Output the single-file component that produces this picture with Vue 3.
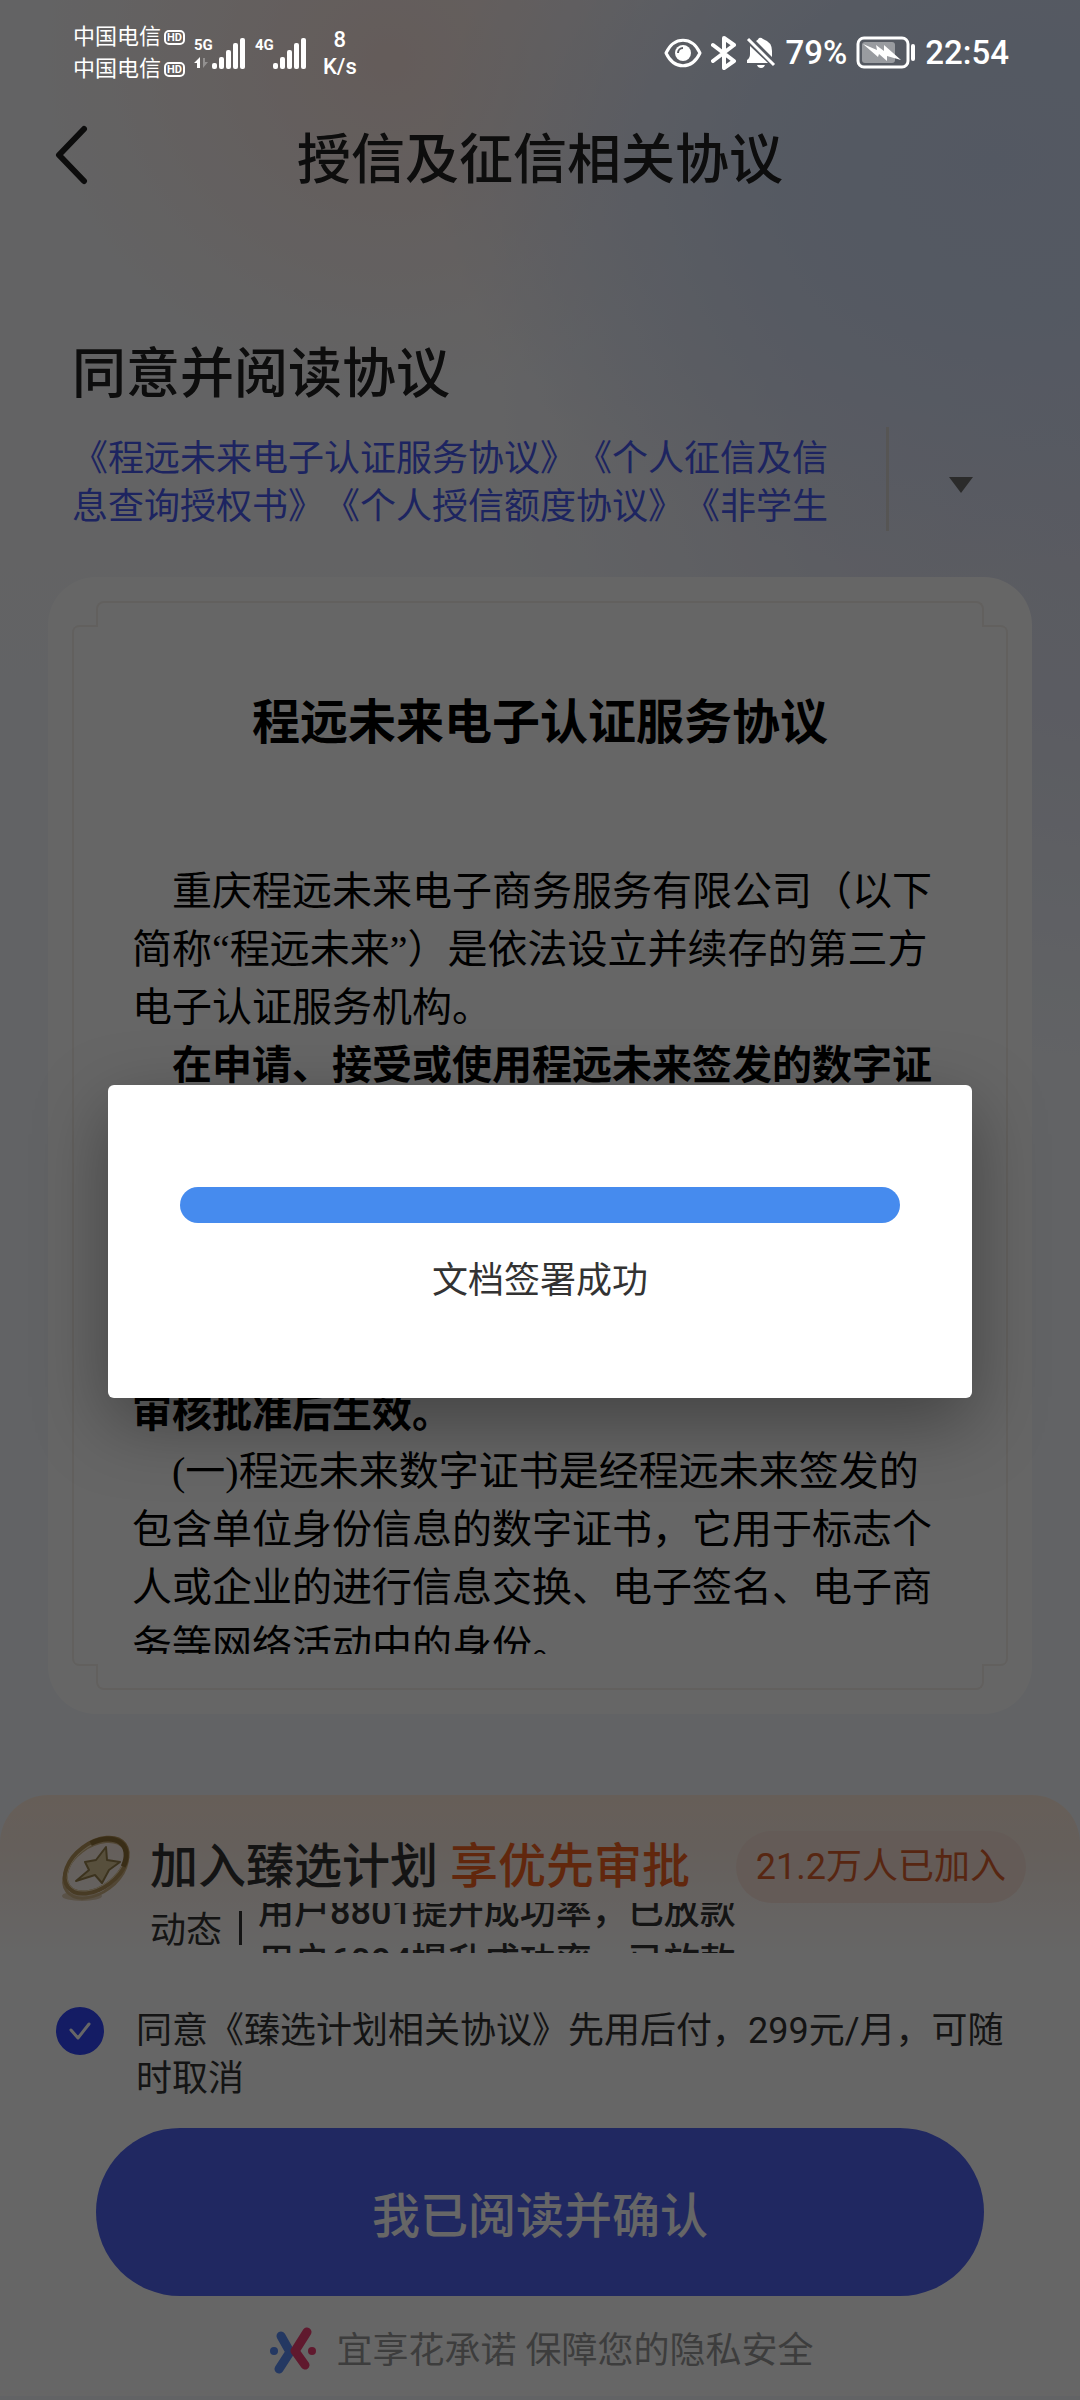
<script setup>
import { ref } from 'vue'

const agreed = ref(true)
const agreements = [
  '《程远未来电子认证服务协议》',
  '《个人征信及信息查询授权书》',
  '《个人授信额度协议》',
  '《非学生承诺函》',
]
const feed = ['用户8801提升成功率，已放款', '用户6094提升成功率，已放款']
const bars = [6, 12, 19, 26, 31]
</script>

<template>
  <div class="page">
    <header class="nav">
      <button class="back" aria-label="返回">
        <svg width="34" height="60" viewBox="0 0 34 60">
          <path d="M30 4 L5 30 L30 56" fill="none" stroke="#1f1f1f" stroke-width="6" stroke-linecap="round" stroke-linejoin="round" />
        </svg>
      </button>
      <h1>授信及征信相关协议</h1>
    </header>

    <section class="intro">
      <h2>同意并阅读协议</h2>
      <div class="picker">
        <p class="links"><a v-for="a in agreements" :key="a" href="#">{{ a }}</a></p>
        <button class="more" aria-label="展开协议列表">
          <svg width="24" height="16" viewBox="0 0 24 16"><path d="M0 0H24L12 16Z" fill="#6b6b6b" /></svg>
        </button>
      </div>
    </section>

    <main class="card">
      <div class="frame">
        <i class="edge upper"></i>
        <i class="edge lower"></i>
        <i class="edge sides"></i>
        <article class="doc">
          <h3>程远未来电子认证服务协议</h3>
          <p>重庆程远未来电子商务服务有限公司（以下简称“程远未来”）是依法设立并续存的第三方电子认证服务机构。</p>
          <p><b>在申请、接受或使用程远未来签发的数字证书之前，您应当认真阅读、充分理解并同意本协议的全部内容。若您不同意本协议，请勿申请、接受或使用数字证书。您的申请行为即视为您已经知悉并接受本协议的约束，且愿意承担相应的法律责任。本协议自证书申请经机构审核批准后生效。</b></p>
          <p>(一)程远未来数字证书是经程远未来签发的包含单位身份信息的数字证书，它用于标志个人或企业的进行信息交换、电子签名、电子商务等网络活动中的身份。</p>
        </article>
      </div>
    </main>

    <footer class="panel">
      <div class="plan">
        <svg class="medal" width="78" height="72" viewBox="0 0 78 72">
          <ellipse cx="26" cy="65" rx="20" ry="5" fill="#e2cdb2" />
          <g fill="none" transform="rotate(-37 40 36)">
            <ellipse cx="38" cy="38" rx="36" ry="23" stroke="#cdb284" stroke-width="3" />
            <ellipse cx="41" cy="35" rx="35" ry="22" stroke="#b4935a" stroke-width="5" />
            <ellipse cx="41" cy="35" rx="33" ry="20" stroke="#efdcb6" stroke-width="1" />
            <path d="M50 14 A35 22 0 0 1 62 52" stroke="#8f7038" stroke-width="5" />
          </g>
          <path d="M50 16 L51 29 L64 31 L53 39 L46 52 L39 44 L20 50 L33 39 L29 31 L40 29Z" fill="#d9c597" stroke="#97804c" stroke-width="2" stroke-linejoin="round" />
        </svg>
        <h4>加入臻选计划 <em>享优先审批</em></h4>
        <span class="joined">21.2万人已加入</span>
      </div>
      <div class="news">
        <span class="label">动态</span>
        <i class="bar"></i>
        <ul class="ticker">
          <li v-for="f in feed" :key="f">{{ f }}</li>
        </ul>
      </div>
      <label class="agree">
        <input v-model="agreed" type="checkbox" />
        <span>同意《臻选计划相关协议》先用后付，299元/月，可随时取消</span>
      </label>
      <button class="confirm">我已阅读并确认</button>
      <p class="promise">
        <svg width="48" height="50" viewBox="0 0 48 50">
          <g fill="none" stroke-width="9" stroke-linecap="round" stroke-linejoin="round">
            <path d="M12 10 L21 26 L10 43" stroke="#5a8cf5" />
            <path d="M38 6 L26 25 L36 39" stroke="#f04074" />
          </g>
          <circle cx="5" cy="25" r="4" fill="#5a8cf5" />
          <circle cx="43" cy="25" r="4" fill="#f04074" />
        </svg>
        <span>宜享花承诺 保障您的隐私安全</span>
      </p>
    </footer>

    <div class="mask">
      <div class="dialog" role="dialog" aria-label="签署进度">
        <div class="progress" role="progressbar" aria-label="文档签署" aria-valuenow="100"></div>
        <p>文档签署成功</p>
      </div>
    </div>

    <div class="status">
      <div class="carriers">
        <div v-for="n in 2" :key="n" class="carrier">中国电信<span class="hd">HD</span></div>
      </div>
      <div class="signal">
        <div class="net">
          <b>5G</b>
          <svg width="14" height="12" viewBox="0 0 14 12">
            <path d="M0 6 L6 0 V11 H3 V6Z" fill="#fff" />
            <path d="M9 1 V11 L14 5 H11 V1Z" fill="#fff" opacity=".3" />
          </svg>
        </div>
        <svg class="bars" width="34" height="32" viewBox="0 0 34 32">
          <rect v-for="(h, i) in bars" :key="i" :x="i * 7" :y="32 - h" width="5" :height="h" rx="2" fill="#fff" />
        </svg>
      </div>
      <div class="signal">
        <div class="net"><b>4G</b></div>
        <svg class="bars" width="34" height="32" viewBox="0 0 34 32">
          <rect v-for="(h, i) in bars" :key="i" :x="i * 7" :y="32 - h" width="5" :height="h" rx="2" fill="#fff" />
        </svg>
      </div>
      <div class="speed"><span>8</span><span>K/s</span></div>
      <div class="tray">
        <svg width="38" height="30" viewBox="0 0 38 30">
          <path d="M2 15 C10 -2 28 -2 36 15 C28 32 10 32 2 15Z" fill="none" stroke="#fff" stroke-width="3" stroke-linejoin="round" />
          <circle cx="19" cy="15" r="8" fill="#fff" />
          <path d="M14 15 A5 5 0 0 1 19 10" fill="none" stroke="#5b5c62" stroke-width="2" />
        </svg>
        <svg width="26" height="34" viewBox="0 0 26 34">
          <path d="M2 9 L23 25 L13 32 V2 L23 9 L2 25" fill="none" stroke="#fff" stroke-width="4" stroke-linejoin="round" stroke-linecap="round" />
        </svg>
        <svg width="30" height="32" viewBox="0 0 30 32">
          <path d="M10 4 Q12 3 13 1 Q15 0 17 2 Q26 5 26 14 V20 Z" fill="#fff" />
          <path d="M4 9 L22 26 H1 V23 Q4 21 4 17Z" fill="#fff" />
          <path d="M2 2 L28 28" stroke="#fff" stroke-width="3" />
          <path d="M11 28 H19 Q18 31 15 31 Q12 31 11 28Z" fill="#fff" />
        </svg>
        <span class="num">79%</span>
        <svg class="battery" width="60" height="34" viewBox="0 0 60 34">
          <rect x="2" y="2" width="50" height="29" rx="6" fill="none" stroke="#fff" stroke-width="3" />
          <rect x="6" y="6" width="33" height="21" rx="3" fill="#fff" opacity=".4" />
          <path d="M57 10 V23" stroke="#fff" stroke-width="4" stroke-linecap="round" />
          <path d="M7 8 L21 14 L20 9 L28 15 L28 9 L45 24 L31 20 L31 25 L23 18 L22 21Z" fill="#fff" />
        </svg>
        <span class="num">22:54</span>
      </div>
    </div>
  </div>
</template>

<style>
body {
  background: #f6f9ff;
}
</style>

<style scoped>
* {
  box-sizing: border-box;
  margin: 0;
  padding: 0;
}
.page {
  position: relative;
  display: flex;
  flex-direction: column;
  min-height: 100vh;
  font-family: Roboto, "Noto Sans CJK SC", sans-serif;
  text-spacing-trim: space-all;
  color: #333;
  background:
    radial-gradient(ellipse 560px 420px at 92% 160px, #d0ddf6 0%, rgba(208, 221, 246, 0.8) 40%, rgba(208, 221, 246, 0) 100%),
    radial-gradient(ellipse 640px 700px at 104% 380px, #dde0f1 0%, rgba(221, 224, 241, 0.7) 50%, rgba(221, 224, 241, 0) 100%),
    radial-gradient(ellipse 360px 340px at 36% 60px, #f9e6e1 0%, rgba(249, 230, 225, 0) 100%),
    linear-gradient(#f8f8fa 0, #f8f8fa 440px, #f5f8fd 800px);
}
button {
  border: 0;
  background: none;
  font: inherit;
}
svg {
  display: block;
  flex: none;
}

/* top bar */
.nav {
  position: relative;
  display: flex;
  align-items: center;
  justify-content: center;
  height: 96px;
  margin-top: 113px;
}
.back {
  position: absolute;
  top: 12px;
  left: 54px;
}
h1,
h2 {
  font-size: 54px;
  line-height: 72px;
  font-weight: 500;
  color: #222;
}

/* agreement picker */
.intro {
  padding: 130px 48px 0 72px;
}
.picker {
  display: flex;
  height: 104px;
  margin-top: 16px;
}
.links {
  flex: none;
  width: 814px;
  padding: 8px 48px 0 0;
  overflow: hidden;
  font-size: 36px;
  line-height: 48px;
}
.links a {
  color: #4a5bf0;
  text-decoration: none;
}
.more {
  flex: 1;
  display: flex;
  align-items: center;
  justify-content: center;
  padding-top: 12px;
  border-left: 3px solid #d6d5d2;
}

/* document card */
.card {
  margin: 46px 48px 0;
  padding: 24px;
  border-radius: 48px;
  background: #fff;
}
.frame {
  position: relative;
  padding: 0 60px;
}
.edge {
  position: absolute;
  border: 2px solid #f4f0ec;
}
.upper {
  inset: 0 24px auto;
  height: 25px;
  border-bottom: 0;
  border-radius: 8px 8px 0 0;
}
.lower {
  inset: auto 24px 0;
  height: 25px;
  border-top: 0;
  border-radius: 0 0 8px 8px;
}
.sides {
  inset: 24px 0;
  border-top: 0;
  border-bottom: 0;
  border-radius: 8px;
}
.sides::before,
.sides::after {
  content: "";
  position: absolute;
  inset: 0 -2px;
  border: solid #f4f0ec;
  border-width: 2px 0;
  border-radius: 8px;
  clip-path: polygon(0 0, 26px 0, 26px 100%, 0 100%);
}
.sides::after {
  clip-path: polygon(calc(100% - 26px) 0, 100% 0, 100% 100%, calc(100% - 26px) 100%);
}
.doc {
  height: 1089px;
  padding-top: 86px;
  border-bottom: 36px solid transparent;
  overflow: hidden;
  font-family: "Liberation Serif", "Noto Sans CJK SC", sans-serif;
  font-size: 40px;
  line-height: 58px;
  color: #000;
}
.doc h3 {
  margin-bottom: 104px;
  font-size: 48px;
  line-height: 72px;
  font-weight: 700;
  text-align: center;
}
.doc p {
  text-indent: 40px;
}

/* bottom panel */
.panel {
  margin-top: 81px;
  padding: 36px 54px 20px 56px;
  border-radius: 48px 48px 0 0;
  background: linear-gradient(#ffecdc 0, #fcede3 50px, #fff 160px);
}
.plan {
  display: flex;
  align-items: center;
  height: 72px;
}
h4 {
  margin-left: 16px;
  font-size: 48px;
  line-height: 72px;
  font-weight: 500;
  color: #333;
}
em {
  font-style: normal;
  color: #f26322;
}
.joined {
  margin-left: auto;
  padding: 0 20px;
  border-radius: 36px;
  background: #fbe3d9;
  color: #d9602e;
  font-size: 36px;
  line-height: 72px;
}
.news {
  display: flex;
  align-items: flex-end;
  height: 50px;
  padding-left: 94px;
  font-size: 36px;
  line-height: 50px;
}
.label {
  line-height: 44px;
}
.bar {
  align-self: center;
  width: 3px;
  height: 34px;
  margin: 0 16px 0 17px;
  background: #333;
}
.ticker {
  height: 50px;
  overflow: hidden;
  list-style: none;
  font-weight: 500;
}
.ticker li:first-child {
  margin-top: -16px;
}
.agree {
  display: flex;
  align-items: flex-start;
  gap: 32px;
  margin-top: 54px;
  font-size: 36px;
  line-height: 48px;
}
.agree input {
  appearance: none;
  flex: none;
  width: 48px;
  height: 48px;
  border: 2px solid #3246fa;
  border-radius: 50%;
}
.agree input:checked {
  background: #3246fa url("data:image/svg+xml,%3Csvg xmlns='http://www.w3.org/2000/svg' viewBox='0 0 48 48'%3E%3Cpath d='M15 23 L22 31 L33 17' fill='none' stroke='%23fff' stroke-width='3' stroke-linecap='round' stroke-linejoin='round'/%3E%3C/svg%3E") center / 48px;
}
.confirm {
  display: block;
  width: calc(100% - 82px);
  height: 168px;
  margin: 25px 42px 0 40px;
  border-radius: 84px;
  background: #5064f2;
  color: #fff;
  font-size: 48px;
  font-weight: 500;
}
.promise {
  display: flex;
  align-items: center;
  justify-content: center;
  gap: 20px;
  margin-top: 30px;
  font-size: 36px;
  line-height: 50px;
  color: #999;
}

/* dialog */
.mask {
  position: absolute;
  inset: 0;
  display: flex;
  align-items: center;
  justify-content: center;
  padding-top: 82px;
  background: rgba(0, 0, 0, 0.6);
}
.dialog {
  width: 80%;
  padding: 102px 72px 90px;
  border-radius: 6px;
  background: #fff;
  box-shadow: 0 24px 72px rgba(0, 0, 0, 0.35);
  text-align: center;
}
.progress {
  height: 36px;
  border-radius: 18px;
  background: #468bee;
}
.dialog p {
  margin-top: 32px;
  font-size: 36px;
  line-height: 53px;
  color: #333;
}

/* system status */
.status {
  position: absolute;
  inset: 0 0 auto;
  display: flex;
  align-items: center;
  height: 106px;
  padding: 0 71px 0 73px;
  color: #fff;
}
.carrier {
  display: flex;
  align-items: center;
  gap: 3px;
  font-size: 22px;
  line-height: 32px;
}
.hd {
  padding: 0 1px;
  border: 2px solid #fff;
  border-radius: 5px;
  font-size: 11px;
  line-height: 11px;
  font-weight: 700;
}
.signal {
  display: flex;
  align-items: flex-end;
  margin-left: 9px;
}
.net {
  display: flex;
  flex-direction: column;
  align-items: flex-start;
  width: 18px;
  height: 32px;
}
.net b {
  font-size: 15px;
  line-height: 16px;
}
.net svg {
  margin-top: 4px;
}
.speed {
  display: flex;
  flex-direction: column;
  align-items: center;
  margin-left: 16px;
  font-size: 22px;
  line-height: 27px;
  font-weight: 500;
}
.tray {
  display: flex;
  align-items: center;
  gap: 9px;
  margin-left: auto;
}
.num {
  font-size: 33px;
  line-height: 40px;
  font-weight: 500;
}
</style>
